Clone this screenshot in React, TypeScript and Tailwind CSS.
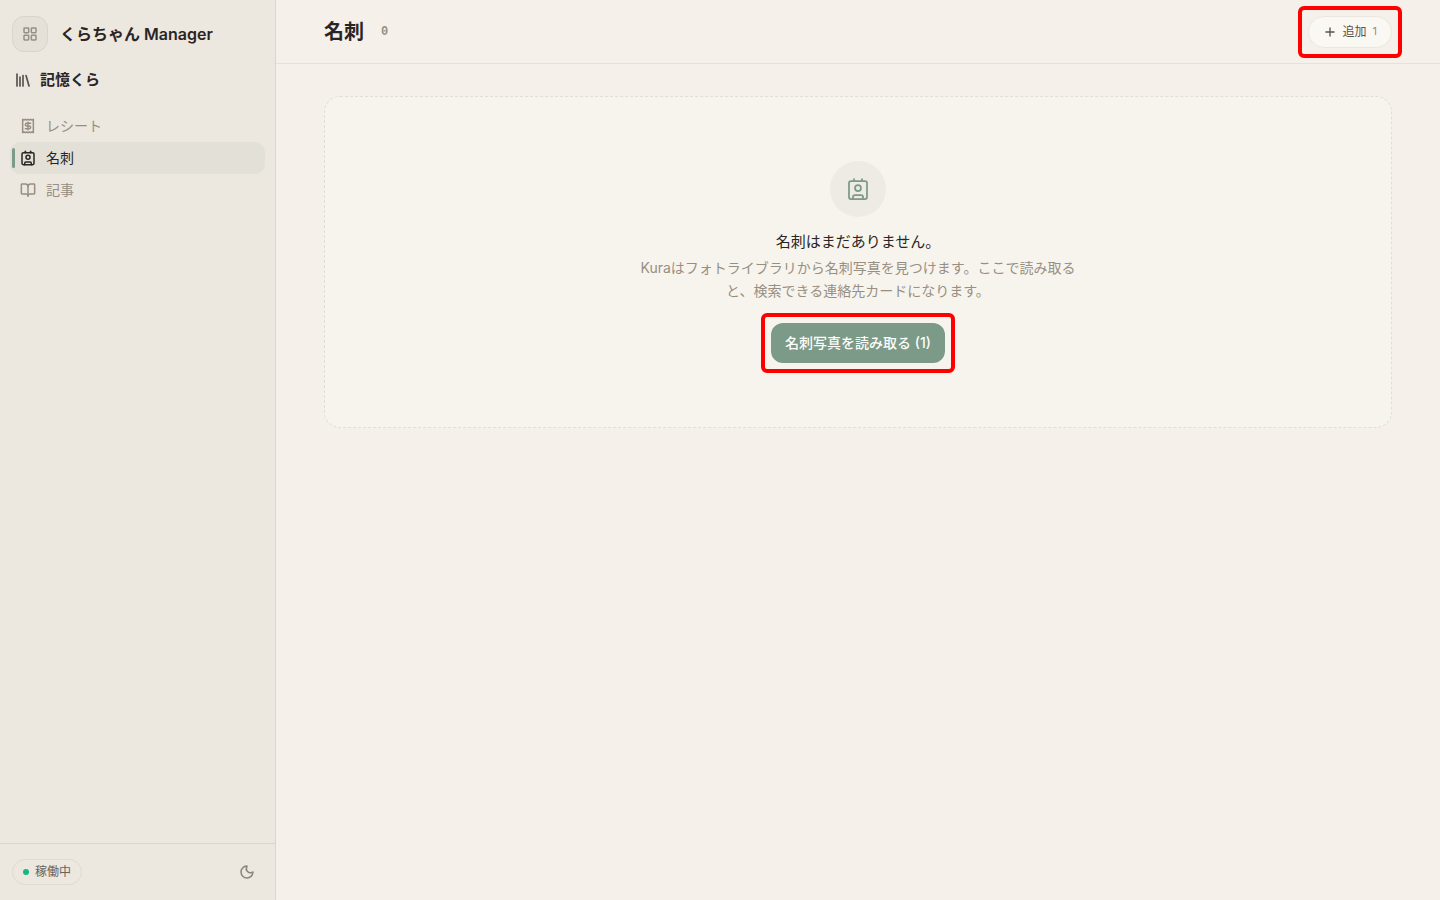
import type { ReactNode } from "react";
import { BookOpen, Contact, LayoutGrid, Library, Moon, Plus, Receipt } from "lucide-react";
import type { LucideIcon } from "lucide-react";

type NavEntry = { label: string; icon: LucideIcon; active?: boolean };

const entries: NavEntry[] = [
  { label: "レシート", icon: Receipt },
  { label: "名刺", icon: Contact, active: true },
  { label: "記事", icon: BookOpen },
];

function Highlight({ children }: { children: ReactNode }) {
  return (
    <div className="relative">
      {children}
      <span className="pointer-events-none absolute -inset-2.5 rounded-md border-4 border-[#ff0000]" />
    </div>
  );
}

function NavItem({ label, icon: Icon, active }: NavEntry) {
  return (
    <a
      href="#"
      aria-current={active ? "page" : undefined}
      className={
        active
          ? "relative flex h-8 items-center gap-2.5 rounded-[10px] bg-[#e3e0d8] px-2.5 text-sm text-[#292524]"
          : "relative flex h-8 items-center gap-2.5 rounded-[10px] px-2.5 text-sm text-[#978f83]"
      }
    >
      {active && <span className="absolute left-0.5 h-5 w-[3px] rounded-full bg-[#7b9a88]" />}
      <Icon size={16} strokeWidth={2.25} />
      {label}
    </a>
  );
}

function Sidebar() {
  return (
    <aside className="flex w-[276px] shrink-0 flex-col border-r border-[#d9d5cc] bg-[#ece7df]">
      <div className="flex items-center gap-3 px-3 pt-4">
        <button
          aria-label="アプリ一覧"
          className="flex size-9 items-center justify-center rounded-xl border border-[#d9d5cc] bg-[#e5e1d8] text-[#978f83]"
        >
          <LayoutGrid size={16} strokeWidth={2.25} />
        </button>
        <span className="text-base font-semibold">くらちゃん Manager</span>
      </div>
      <div className="flex items-center gap-2 px-3.5 pt-4 text-[15px] leading-6 font-semibold">
        <Library size={18} strokeWidth={2.25} className="text-[#57534e]" />
        記憶くら
      </div>
      <nav className="flex flex-col px-2.5 pt-[18px]">
        {entries.map((entry) => (
          <NavItem key={entry.label} {...entry} />
        ))}
      </nav>
      <div className="mt-auto flex h-[57px] items-center justify-between border-t border-[#d9d5cc] px-3">
        <span className="flex h-[26px] items-center gap-1.5 rounded-full border border-[#dfdbd2] px-2.5 text-xs text-[#67625b]">
          <span className="size-1.5 rounded-full bg-[#10b981]" />
          稼働中
        </span>
        <button aria-label="ダークモード" className="flex size-8 items-center justify-center text-[#8b8478]">
          <Moon size={16} strokeWidth={2.25} />
        </button>
      </div>
    </aside>
  );
}

export default function App() {
  return (
    <div className="flex min-h-screen bg-[#f5f0ea] font-['Inter','Noto_Sans_CJK_JP',sans-serif] text-[#292524]">
      <Sidebar />
      <div className="flex min-w-0 flex-1 flex-col">
        <header className="flex h-16 items-center justify-between border-b border-[#e6e1da] px-12">
          <div className="flex items-center gap-[17px]">
            <h1 className="text-xl font-bold">名刺</h1>
            <span className="font-['Liberation_Mono',monospace] text-xs font-bold text-[#978f83]">0</span>
          </div>
          <Highlight>
            <button className="flex h-8 items-center gap-1.5 rounded-full border border-[#ece8e0] bg-[#faf8f3] px-3.5 text-xs text-[#57534e]">
              <Plus size={14} strokeWidth={2.25} />
              追加
              <span className="text-[11px] text-[#978f83]">1</span>
            </button>
          </Highlight>
        </header>
        <main className="px-12 py-8">
          <section className="flex flex-col items-center rounded-2xl border border-dashed border-[#dfdfd8] bg-[#f7f4ed] px-6 py-16 text-center">
            <div className="flex size-14 items-center justify-center rounded-full bg-[#eeeae4] text-[#7b9a88]">
              <Contact size={24} strokeWidth={1.75} />
            </div>
            <h2 className="mt-[15px] text-[15px] leading-5">名刺はまだありません。</h2>
            <p className="mt-1 mb-[21px] max-w-md text-sm leading-[23px] text-[#978f83]">
              Kuraはフォトライブラリから名刺写真を見つけます。ここで読み取ると、検索できる連絡先カードになります。
            </p>
            <Highlight>
              <button className="h-10 rounded-xl bg-[#7b9a88] px-3.5 text-sm font-medium text-[#fdfcf9]">
                名刺写真を読み取る (1)
              </button>
            </Highlight>
          </section>
        </main>
      </div>
    </div>
  );
}
